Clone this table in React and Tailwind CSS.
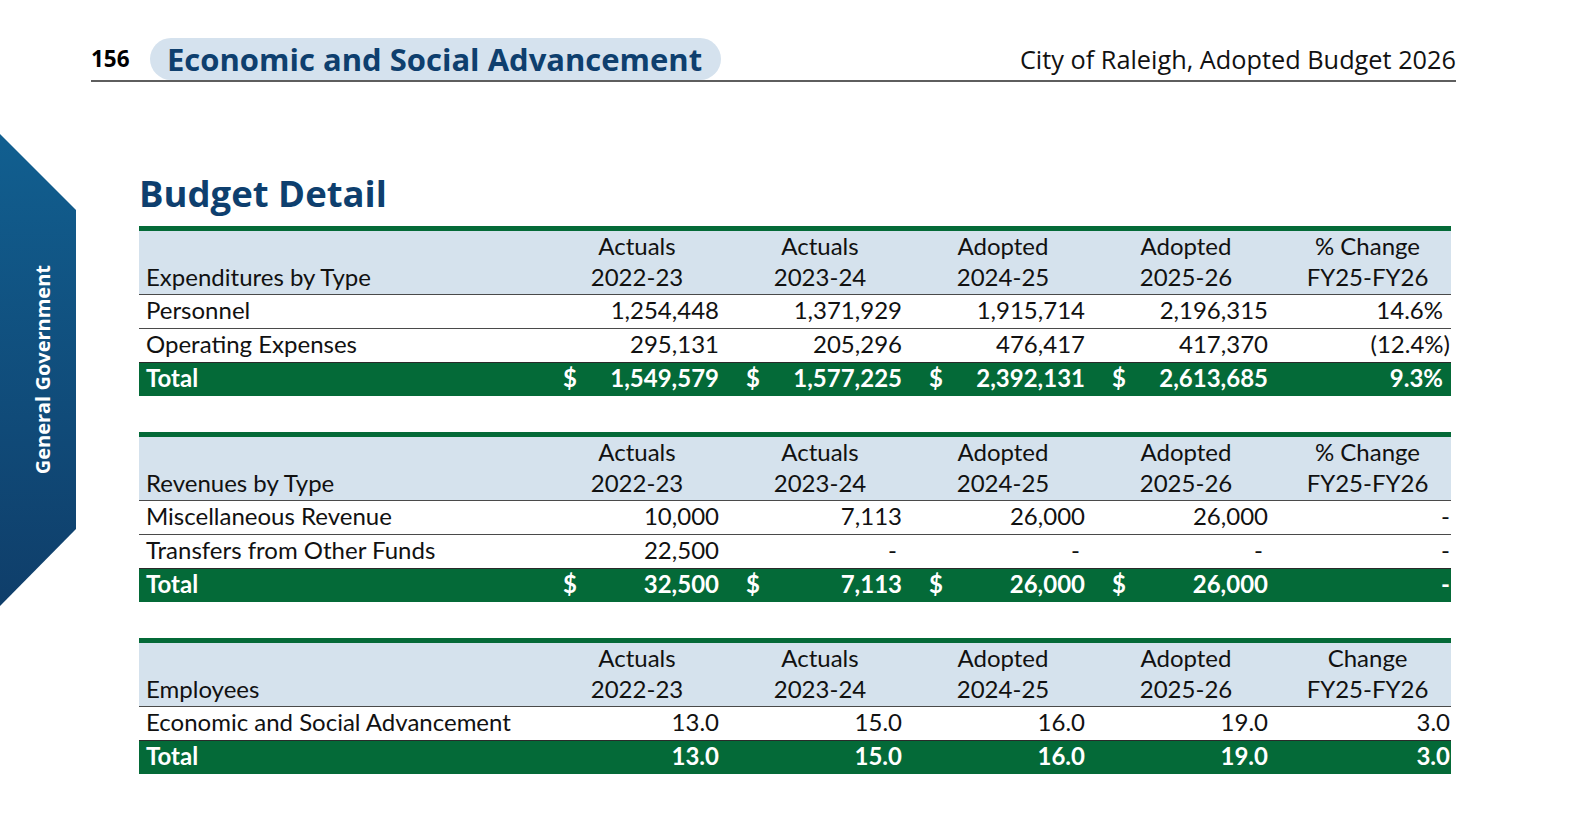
import React from 'react';

const font = { fontFamily: 'Lato, "Open Sans", sans-serif' };
const headFont = { fontFamily: '"Open Sans", Lato, sans-serif' };

const tables = [
  {
    label: 'Expenditures by Type',
    heads: [
      ['Actuals', '2022-23'],
      ['Actuals', '2023-24'],
      ['Adopted', '2024-25'],
      ['Adopted', '2025-26'],
      ['% Change', 'FY25-FY26'],
    ],
    rows: [
      ['Personnel', '1,254,448', '1,371,929', '1,915,714', '2,196,315', '14.6%'],
      ['Operating Expenses', '295,131', '205,296', '476,417', '417,370', '(12.4%)'],
    ],
    total: ['1,549,579', '1,577,225', '2,392,131', '2,613,685', '9.3%'],
    dollar: true,
  },
  {
    label: 'Revenues by Type',
    heads: [
      ['Actuals', '2022-23'],
      ['Actuals', '2023-24'],
      ['Adopted', '2024-25'],
      ['Adopted', '2025-26'],
      ['% Change', 'FY25-FY26'],
    ],
    rows: [
      ['Miscellaneous Revenue', '10,000', '7,113', '26,000', '26,000', '-'],
      ['Transfers from Other Funds', '22,500', '-', '-', '-', '-'],
    ],
    total: ['32,500', '7,113', '26,000', '26,000', '-'],
    dollar: true,
  },
  {
    label: 'Employees',
    heads: [
      ['Actuals', '2022-23'],
      ['Actuals', '2023-24'],
      ['Adopted', '2024-25'],
      ['Adopted', '2025-26'],
      ['Change', 'FY25-FY26'],
    ],
    rows: [['Economic and Social Advancement', '13.0', '15.0', '16.0', '19.0', '3.0']],
    total: ['13.0', '15.0', '16.0', '19.0', '3.0'],
    dollar: false,
  },
];

const cols = 'grid grid-cols-[404px_183px_183px_183px_183px_176px]';

// padding for a value cell, Excel-ish alignment
const valuePad = (v, last) => {
  if (last) {
    if (v.startsWith('(') || v === '-' || !v.endsWith('%')) return 'pr-[1px]';
    return 'pr-[8px]';
  }
  if (v === '-') return 'pr-[12px]';
  return 'pr-[7px]';
};

const BudgetTable = ({ t }) => (
  <div className="w-[1312px] border-t-[5px] border-[#046a38]">
    <div className={`${cols} h-[63px] bg-[#d5e2ed] text-[24px] leading-[30.5px] text-[#111]`}>
      <div className="flex flex-col justify-end pb-[2px] pl-[7px]">{t.label}</div>
      {t.heads.map((h, i) => (
        <div key={i} className={`flex flex-col items-center ${i === 4 ? 'pl-[9px]' : 'pl-[5px]'}`}>
          <span>{h[0]}</span>
          <span>{h[1]}</span>
        </div>
      ))}
    </div>
    {t.rows.map((r, ri) => (
      <div key={ri} className={`${cols} h-[34px] pb-[3px] border-t border-[#4a4a4a] text-[24px] leading-[28px] text-[#111] items-center`}>
        <div className="pl-[7px]">{r[0]}</div>
        {r.slice(1).map((v, i) => (
          <div key={i} className={`text-right ${valuePad(v, i === 4)}`}>{v}</div>
        ))}
      </div>
    ))}
    <div className={`${cols} h-[34px] pb-[3px] border-t border-[#2a2a2a] bg-[#046a38] text-[24px] leading-[28px] font-bold text-white items-center`}>
      <div className="pl-[7px]">Total</div>
      {t.total.map((v, i) => (
        <div key={i} className={`flex justify-between ${valuePad(v, i === 4)} ${t.dollar && i < 4 ? 'pl-[20px]' : ''}`}>
          <span>{t.dollar && i < 4 ? '$' : ''}</span>
          <span>{v}</span>
        </div>
      ))}
    </div>
  </div>
);

export default function App() {
  return (
    <div className="w-[1592px] h-[817px] overflow-hidden bg-white" style={font}>
      <header className="ml-[91px] w-[1365px] pt-[38px]" style={headFont}>
        <div className="flex items-center h-[42px]">
          <span className="w-[59px] text-[22.5px] font-bold text-black">156</span>
          <div className="h-[42px] rounded-full bg-[#d5e2ee] pl-[17px] pr-[19px] flex items-center">
            <span className="text-[31px] font-bold text-[#0e3f6e] leading-none">Economic and Social Advancement</span>
          </div>
          <span className="ml-auto text-[25.3px] text-[#111] mt-[2px]">City of Raleigh, Adopted Budget 2026</span>
        </div>
        <div className="h-[2px] bg-[#5e5e5e]" />
      </header>

      <div className="flex">
        <div className="w-[76px] h-[472px] mt-[52px] bg-linear-to-b from-[#115f90] to-[#0f3e6a] [clip-path:polygon(0_0,100%_76px,100%_395px,0_100%)] flex items-center justify-center pl-[9px]">
          <span className="[writing-mode:vertical-rl] rotate-180 text-white font-bold text-[20px] whitespace-nowrap" style={headFont}>
            General Government
          </span>
        </div>

        <main className="ml-[63px] pt-[92px]">
          <h1 className="text-[36.5px] leading-[38px] font-bold text-[#0e3f6e]" style={headFont}>Budget Detail</h1>
          <div className="mt-[14px] flex flex-col gap-[36px]">
            {tables.map((t, i) => (
              <BudgetTable key={i} t={t} />
            ))}
          </div>
        </main>
      </div>
    </div>
  );
}
